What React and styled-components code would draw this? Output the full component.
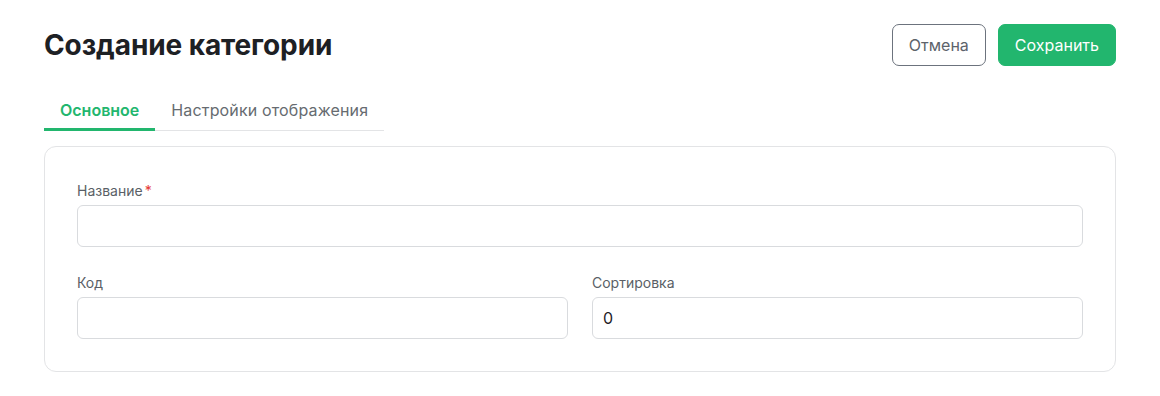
import React, { useState } from 'react';
import styled, { createGlobalStyle } from 'styled-components';

const GlobalStyle = createGlobalStyle`
    body {
        margin: 0;
        background: #fff;
        font-family: Inter, "Noto Sans", sans-serif;
        color: #1f2328;
    }
    * { box-sizing: border-box; }
`;

const Page = styled.div`
    padding: 24px 44px;
`;

const Header = styled.header`
    display: flex;
    justify-content: space-between;
    align-items: center;
`;

const Title = styled.h1`
    margin: 0;
    font-size: 28px;
    font-weight: 700;
    letter-spacing: -0.1px;
    color: #1d2024;
`;

const Actions = styled.div`
    display: flex;
    gap: 12px;
`;

const Button = styled.button`
    height: 42px;
    padding: 0 16px;
    border-radius: 7px;
    font-family: inherit;
    font-size: 16px;
    font-weight: 400;
    cursor: pointer;
    border: 1px solid ${p => (p.$primary ? '#22b66e' : '#6c737d')};
    background: ${p => (p.$primary ? '#22b66e' : '#fff')};
    color: ${p => (p.$primary ? '#fff' : '#5c636b')};
`;

const Tabs = styled.nav`
    display: flex;
    margin-top: 25px;
`;

const Tab = styled.button`
    background: none;
    border: none;
    padding: 9px 16px 11px;
    font-family: inherit;
    font-size: 16px;
    font-weight: ${p => (p.$active ? 600 : 400)};
    letter-spacing: ${p => (p.$active ? '0' : '0.15px')};
    color: ${p => (p.$active ? '#22b66e' : '#666b70')};
    border-bottom: ${p => (p.$active ? '3px solid #22b66e' : '1px solid #e3e4e6')};
    padding-bottom: ${p => (p.$active ? '9px' : '11px')};
    cursor: pointer;
    height: 40px;
    align-self: flex-end;
`;

const Card = styled.section`
    margin-top: 15px;
    border: 1px solid #e3e4e6;
    border-radius: 12px;
    padding: 35px 32px 32px;
    display: flex;
    flex-direction: column;
    gap: 27px;
`;

const Row = styled.div`
    display: grid;
    grid-template-columns: ${p => (p.$cols === 2 ? '1fr 1fr' : '1fr')};
    gap: 24px;
`;

const Field = styled.label`
    display: flex;
    flex-direction: column;
    gap: 6px;
`;

const Label = styled.span`
    font-size: 14px;
    color: #5a5f66;
    line-height: 17px;
`;

const Required = styled.span`
    color: #e53935;
    margin-left: 2px;
`;

const Input = styled.input`
    height: 42px;
    border: 1px solid #d9dbde;
    border-radius: 6px;
    padding: 0 10px;
    font-family: inherit;
    font-size: 16px;
    color: #1f2328;
    outline: none;
`;

const App = () => {
    const [tab, setTab] = useState(0);
    const [sort, setSort] = useState('0');

    return (
        <>
            <GlobalStyle />
            <Page>
                <Header>
                    <Title>Создание категории</Title>
                    <Actions>
                        <Button>Отмена</Button>
                        <Button $primary>Сохранить</Button>
                    </Actions>
                </Header>
                <Tabs>
                    <Tab $active={tab === 0} onClick={() => setTab(0)}>Основное</Tab>
                    <Tab $active={tab === 1} onClick={() => setTab(1)}>Настройки отображения</Tab>
                </Tabs>
                <Card>
                    <Row>
                        <Field>
                            <Label>Название<Required>*</Required></Label>
                            <Input />
                        </Field>
                    </Row>
                    <Row $cols={2}>
                        <Field>
                            <Label>Код</Label>
                            <Input />
                        </Field>
                        <Field>
                            <Label>Сортировка</Label>
                            <Input value={sort} onChange={e => setSort(e.target.value)} />
                        </Field>
                    </Row>
                </Card>
            </Page>
        </>
    );
};

export default App;
